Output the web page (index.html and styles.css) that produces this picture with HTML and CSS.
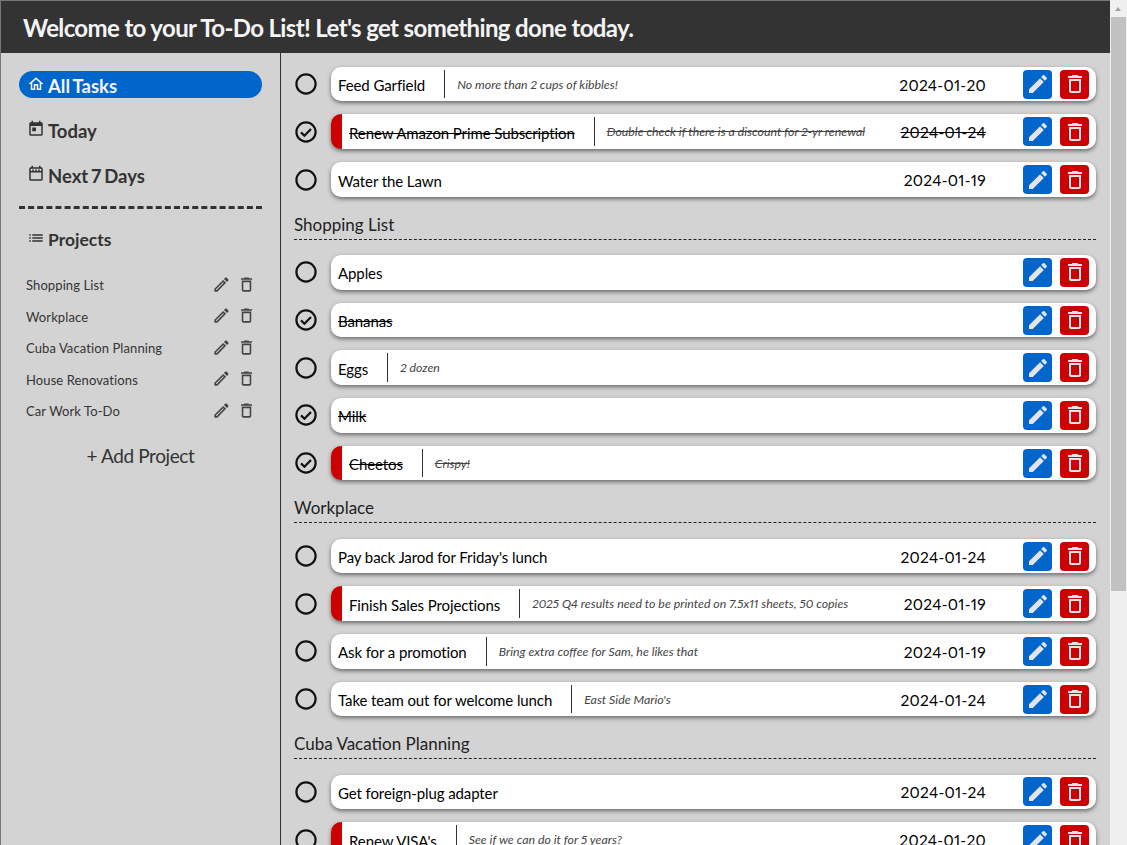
FILE: index.html
```html
<!DOCTYPE html>
<html lang="en">
<head>
    <meta charset="UTF-8">
    <meta name="viewport" content="width=device-width, initial-scale=1.0">
    <title>To-Do List</title>
    <link rel="stylesheet" href="styles.css">
</head>
<body>
    <svg class="sprites" width="0" height="0">
        <symbol id="i-edit" viewBox="0 0 24 24"><path d="M3 17.25V21h3.75L17.81 9.94l-3.75-3.75L3 17.25zM20.71 7.04c.39-.39.39-1.02 0-1.41l-2.34-2.34c-.39-.39-1.02-.39-1.41 0l-1.83 1.83 3.75 3.75 1.83-1.83z"/></symbol>
        <symbol id="i-edit-line" viewBox="0 0 24 24"><path d="M3 17.25V21h3.75L17.81 9.94l-3.75-3.75L3 17.25zM5.92 19H5v-.92l9.06-9.06.92.92L5.92 19zM20.71 5.63l-2.34-2.34c-.2-.2-.45-.29-.71-.29s-.51.1-.7.29l-1.83 1.83 3.75 3.75 1.83-1.83c.39-.39.39-1.02 0-1.41z"/></symbol>
        <symbol id="i-trash" viewBox="0 0 24 24"><path d="M6 19c0 1.1.9 2 2 2h8c1.1 0 2-.9 2-2V7H6v12zM8 9h8v10H8V9zm7.5-5l-1-1h-5l-1 1H5v2h14V4z"/></symbol>
        <symbol id="i-open" viewBox="0 0 24 24"><circle cx="12" cy="12" r="9.6" fill="none" stroke="currentColor" stroke-width="2.2"/></symbol>
        <symbol id="i-done" viewBox="0 0 24 24"><circle cx="12" cy="12" r="9.6" fill="none" stroke="currentColor" stroke-width="2.2"/><path d="M7 12.4l3.4 3.4L17 9" fill="none" stroke="currentColor" stroke-width="2.2"/></symbol>
    </svg>
    <div class="app">
        <header class="top-bar">
            <h1>Welcome to your To-Do List! Let's get something done today.</h1>
        </header>
        <div class="layout">
            <nav class="sidebar">
                <a class="nav-item active">
                    <svg class="nav-icon" viewBox="0 0 24 24"><path d="M12 5.69l5 4.5V18h-2v-6H9v6H7v-7.81l5-4.5M12 3L2 12h3v8h6v-6h2v6h6v-8h3L12 3z"/></svg>
                    All Tasks
                </a>
                <a class="nav-item">
                    <svg class="nav-icon" viewBox="0 0 24 24"><path d="M19 3h-1V1h-2v2H8V1H6v2H5c-1.1 0-2 .9-2 2v14c0 1.1.9 2 2 2h14c1.1 0 2-.9 2-2V5c0-1.1-.9-2-2-2zm0 16H5V8h14v11zM7 10h5v5H7z"/></svg>
                    Today
                </a>
                <a class="nav-item">
                    <svg class="nav-icon" viewBox="0 0 24 24"><path d="M19 3h-1V1h-2v2H8V1H6v2H5c-1.1 0-2 .9-2 2v14c0 1.1.9 2 2 2h14c1.1 0 2-.9 2-2V5c0-1.1-.9-2-2-2zm0 16H5V10h14v9zM5 8V5h14v3H5zm2 0h2V6H7zm4 0h2V6h-2zm4 0h2V6h-2z"/></svg>
                    Next 7 Days
                </a>
                <hr class="nav-divider">
                <div class="nav-item projects-title">
                    <svg class="nav-icon" viewBox="0 0 24 24"><path d="M3 13h2v-2H3v2zm0 4h2v-2H3v2zm0-8h2V7H3v2zm4 4h14v-2H7v2zm0 4h14v-2H7v2zM7 7v2h14V7H7z"/></svg>
                    Projects
                </div>
                <ul class="project-list">
                    <li class="project"><span>Shopping List</span><svg class="project-icon"><use href="#i-edit-line"/></svg><svg class="project-icon"><use href="#i-trash"/></svg></li>
                    <li class="project"><span>Workplace</span><svg class="project-icon"><use href="#i-edit-line"/></svg><svg class="project-icon"><use href="#i-trash"/></svg></li>
                    <li class="project"><span>Cuba Vacation Planning</span><svg class="project-icon"><use href="#i-edit-line"/></svg><svg class="project-icon"><use href="#i-trash"/></svg></li>
                    <li class="project"><span>House Renovations</span><svg class="project-icon"><use href="#i-edit-line"/></svg><svg class="project-icon"><use href="#i-trash"/></svg></li>
                    <li class="project"><span>Car Work To-Do</span><svg class="project-icon"><use href="#i-edit-line"/></svg><svg class="project-icon"><use href="#i-trash"/></svg></li>
                </ul>
                <div class="add-project">+ Add Project</div>
            </nav>

            <main class="tasks">
                <section class="group">
                    <div class="task">
                        <svg class="check"><use href="#i-open"/></svg>
                        <div class="card">
                            <span class="name">Feed Garfield</span>
                            <span class="note">No more than 2 cups of kibbles!</span>
                            <span class="date">2024-01-20</span>
                            <button class="btn edit"><svg><use href="#i-edit"/></svg></button>
                            <button class="btn del"><svg><use href="#i-trash"/></svg></button>
                        </div>
                    </div>
                    <div class="task done">
                        <svg class="check"><use href="#i-done"/></svg>
                        <div class="card urgent">
                            <span class="name">Renew Amazon Prime Subscription</span>
                            <span class="note">Double check if there is a discount for 2-yr renewal</span>
                            <span class="date">2024-01-24</span>
                            <button class="btn edit"><svg><use href="#i-edit"/></svg></button>
                            <button class="btn del"><svg><use href="#i-trash"/></svg></button>
                        </div>
                    </div>
                    <div class="task">
                        <svg class="check"><use href="#i-open"/></svg>
                        <div class="card">
                            <span class="name plain">Water the Lawn</span>
                            <span class="date">2024-01-19</span>
                            <button class="btn edit"><svg><use href="#i-edit"/></svg></button>
                            <button class="btn del"><svg><use href="#i-trash"/></svg></button>
                        </div>
                    </div>
                </section>

                <section class="group">
                    <h2>Shopping List</h2>
                    <div class="task">
                        <svg class="check"><use href="#i-open"/></svg>
                        <div class="card">
                            <span class="name plain">Apples</span>
                            <button class="btn edit"><svg><use href="#i-edit"/></svg></button>
                            <button class="btn del"><svg><use href="#i-trash"/></svg></button>
                        </div>
                    </div>
                    <div class="task done">
                        <svg class="check"><use href="#i-done"/></svg>
                        <div class="card">
                            <span class="name plain">Bananas</span>
                            <button class="btn edit"><svg><use href="#i-edit"/></svg></button>
                            <button class="btn del"><svg><use href="#i-trash"/></svg></button>
                        </div>
                    </div>
                    <div class="task">
                        <svg class="check"><use href="#i-open"/></svg>
                        <div class="card">
                            <span class="name">Eggs</span>
                            <span class="note">2 dozen</span>
                            <button class="btn edit"><svg><use href="#i-edit"/></svg></button>
                            <button class="btn del"><svg><use href="#i-trash"/></svg></button>
                        </div>
                    </div>
                    <div class="task done">
                        <svg class="check"><use href="#i-done"/></svg>
                        <div class="card">
                            <span class="name plain">Milk</span>
                            <button class="btn edit"><svg><use href="#i-edit"/></svg></button>
                            <button class="btn del"><svg><use href="#i-trash"/></svg></button>
                        </div>
                    </div>
                    <div class="task done">
                        <svg class="check"><use href="#i-done"/></svg>
                        <div class="card urgent">
                            <span class="name">Cheetos</span>
                            <span class="note">Crispy!</span>
                            <button class="btn edit"><svg><use href="#i-edit"/></svg></button>
                            <button class="btn del"><svg><use href="#i-trash"/></svg></button>
                        </div>
                    </div>
                </section>

                <section class="group">
                    <h2>Workplace</h2>
                    <div class="task">
                        <svg class="check"><use href="#i-open"/></svg>
                        <div class="card">
                            <span class="name plain">Pay back Jarod for Friday's lunch</span>
                            <span class="date">2024-01-24</span>
                            <button class="btn edit"><svg><use href="#i-edit"/></svg></button>
                            <button class="btn del"><svg><use href="#i-trash"/></svg></button>
                        </div>
                    </div>
                    <div class="task">
                        <svg class="check"><use href="#i-open"/></svg>
                        <div class="card urgent">
                            <span class="name">Finish Sales Projections</span>
                            <span class="note">2025 Q4 results need to be printed on 7.5x11 sheets, 50 copies</span>
                            <span class="date">2024-01-19</span>
                            <button class="btn edit"><svg><use href="#i-edit"/></svg></button>
                            <button class="btn del"><svg><use href="#i-trash"/></svg></button>
                        </div>
                    </div>
                    <div class="task">
                        <svg class="check"><use href="#i-open"/></svg>
                        <div class="card">
                            <span class="name">Ask for a promotion</span>
                            <span class="note">Bring extra coffee for Sam, he likes that</span>
                            <span class="date">2024-01-19</span>
                            <button class="btn edit"><svg><use href="#i-edit"/></svg></button>
                            <button class="btn del"><svg><use href="#i-trash"/></svg></button>
                        </div>
                    </div>
                    <div class="task">
                        <svg class="check"><use href="#i-open"/></svg>
                        <div class="card">
                            <span class="name">Take team out for welcome lunch</span>
                            <span class="note">East Side Mario's</span>
                            <span class="date">2024-01-24</span>
                            <button class="btn edit"><svg><use href="#i-edit"/></svg></button>
                            <button class="btn del"><svg><use href="#i-trash"/></svg></button>
                        </div>
                    </div>
                </section>

                <section class="group">
                    <h2>Cuba Vacation Planning</h2>
                    <div class="task">
                        <svg class="check"><use href="#i-open"/></svg>
                        <div class="card">
                            <span class="name plain">Get foreign-plug adapter</span>
                            <span class="date">2024-01-24</span>
                            <button class="btn edit"><svg><use href="#i-edit"/></svg></button>
                            <button class="btn del"><svg><use href="#i-trash"/></svg></button>
                        </div>
                    </div>
                    <div class="task">
                        <svg class="check"><use href="#i-open"/></svg>
                        <div class="card urgent">
                            <span class="name">Renew VISA's</span>
                            <span class="note">See if we can do it for 5 years?</span>
                            <span class="date">2024-01-20</span>
                            <button class="btn edit"><svg><use href="#i-edit"/></svg></button>
                            <button class="btn del"><svg><use href="#i-trash"/></svg></button>
                        </div>
                    </div>
                </section>
            </main>
        </div>
    </div>
    <div class="scrollbar">
        <div class="scroll-arrow"></div>
        <div class="scroll-thumb"></div>
    </div>
</body>
</html>
```

FILE: styles.css
```css
* {
    box-sizing: border-box;
}
body {
    font-family: "Lato", sans-serif;
    font-variant-numeric: proportional-nums;
    margin: 0;
    height: 845px;
    overflow: hidden;
    display: flex;
    background: #d3d3d3;
    color: #333;
}
.sprites {
    position: absolute;
}
.app {
    flex: 1;
    min-width: 0;
    display: flex;
    flex-direction: column;
    border-top: 1px solid #777;
    border-left: 1px solid #777;
}
.top-bar {
    height: 52px;
    flex-shrink: 0;
    background: #333;
    color: #f4f4f4;
    display: flex;
    align-items: center;
    padding: 1px 0 0 22px;
}
.top-bar h1 {
    margin: 0;
    font-size: 24px;
    font-weight: 700;
    letter-spacing: -0.63px;
}
.layout {
    flex: 1;
    min-height: 0;
    display: flex;
}

/* sidebar */
.sidebar {
    width: 280px;
    flex-shrink: 0;
    border-right: 1px solid #333;
    padding: 18px 18px 0;
}
.nav-item {
    display: flex;
    align-items: center;
    gap: 3px;
    height: 27px;
    margin-bottom: 18px;
    padding: 2px 0 0 8px;
    font-size: 18.5px;
    font-weight: 700;
    word-spacing: -1.5px;
    border-radius: 14px;
}
.nav-item.active {
    background: #0066cc;
    color: #f4f4f4;
}
.nav-icon {
    width: 18px;
    height: 18px;
    fill: currentColor;
    margin-top: -4px;
}
.nav-divider {
    border: none;
    border-top: 3px dashed #333;
    margin: 0 0 16px;
}
.projects-title {
    margin-bottom: 17.4px;
    font-size: 17.5px;
}
.project-list {
    list-style: none;
    margin: 0;
    padding: 0 0 0 7px;
}
.project {
    display: flex;
    align-items: center;
    height: 31.5px;
    font-size: 13px;
    letter-spacing: 0.1px;
}
.project span {
    flex: 1;
}
.project-icon {
    width: 19px;
    height: 19px;
    fill: #444;
    margin-right: 6px;
    margin-top: -2px;
}
.add-project {
    margin-top: 17.5px;
    text-align: center;
    font-size: 19px;
    letter-spacing: -0.4px;
}

/* task list */
.tasks {
    flex: 1;
    min-width: 0;
    height: 100%;
    overflow: hidden;
    padding: 13.8px 14px 0 13px;
    color: #000;
}
.group {
    margin-bottom: 14.7px;
}
.group h2 {
    margin: 0 0 15.5px;
    height: 28px;
    line-height: 26px;
    font-size: 17px;
    font-weight: 400;
    color: #222;
    border-bottom: 1px dashed #222;
}
.task {
    display: flex;
    align-items: center;
    gap: 13px;
    height: 34.7px;
    margin-bottom: 13px;
}
.check {
    width: 24px;
    height: 24px;
    flex-shrink: 0;
    color: #111;
}
.card {
    flex: 1;
    min-width: 0;
    height: 100%;
    display: flex;
    align-items: center;
    gap: 7px;
    padding: 3px 7px;
    background: #fff;
    border-radius: 10px;
    box-shadow: 0 2px 4px rgba(0, 0, 0, 0.5);
}
.card.urgent {
    border-left: 11px solid #cc0000;
}
.name {
    font-size: 15px;
    letter-spacing: -0.1px;
    align-self: stretch;
    display: flex;
    align-items: center;
    padding: 2px 19px 0 0;
    border-right: 1px solid #333;
    white-space: nowrap;
}
.name.plain {
    border-right: none;
}
.note {
    margin-left: 5px;
    font-size: 12.35px;
    font-style: italic;
    color: #444;
    white-space: nowrap;
}
.date {
    margin-left: auto;
    margin-right: 30px;
    padding-top: 1px;
    font-size: 15.5px;
    letter-spacing: 0.3px;
}
.name.plain + .btn,
.note + .btn {
    margin-left: auto;
}
.done .name,
.done .note,
.done .date {
    text-decoration: line-through;
}
.btn {
    width: 29px;
    height: 29px;
    flex-shrink: 0;
    padding: 0;
    border: none;
    border-radius: 4px;
    display: flex;
    align-items: center;
    justify-content: center;
}
.btn svg {
    width: 24px;
    height: 24px;
    fill: #e4e4ee;
}
.btn.edit {
    background: #0066cc;
}
.btn.del {
    background: #cc0000;
    margin-left: 1px;
}

/* fake browser scrollbar */
.scrollbar {
    width: 17px;
    flex-shrink: 0;
    background: #f0f0f0;
    padding: 17px 1px 0 1px;
    position: relative;
}
.scroll-arrow {
    position: absolute;
    top: 7px;
    left: 5px;
    width: 0;
    height: 0;
    border-left: 3.5px solid transparent;
    border-right: 3.5px solid transparent;
    border-bottom: 4px solid #a3a3a3;
}
.scroll-thumb {
    height: 574px;
    background: #c1c1c1;
}
```
